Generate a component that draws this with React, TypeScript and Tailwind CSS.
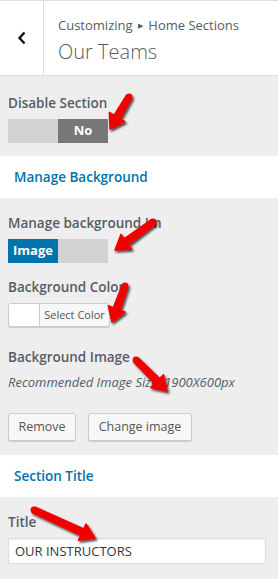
import React from 'react';

type Pt = [number, number];

// red annotation arrow: tail -> tip
function arrowPoints(tail: Pt, tip: Pt) {
    const [x1, y1] = tail;
    const [x2, y2] = tip;
    const dx = x2 - x1;
    const dy = y2 - y1;
    const len = Math.hypot(dx, dy);
    const ux = dx / len;
    const uy = dy / len;
    const nx = -uy;
    const ny = ux;
    const head = 14;
    const hw = 9;
    const bx = x2 - ux * head;
    const by = y2 - uy * head;
    const sw = 3.6;
    const tw = 3;
    const p: Pt[] = [
        [x1 + nx * tw, y1 + ny * tw],
        [bx + nx * sw, by + ny * sw],
        [bx + nx * hw, by + ny * hw],
        [x2, y2],
        [bx - nx * hw, by - ny * hw],
        [bx - nx * sw, by - ny * sw],
        [x1 - nx * tw, y1 - ny * tw],
    ];
    return p.map(([x, y]) => `${x.toFixed(1)},${y.toFixed(1)}`).join(' ');
}

const arrows: [Pt, Pt][] = [
    [[129, 97], [110, 129]],
    [[153, 222], [115, 250]],
    [[125, 286], [112, 322]],
    [[136, 360], [167, 391]],
    [[34, 510], [95, 538]],
];

function Arrows() {
    return (
        <svg className="pointer-events-none absolute inset-0" width="278" height="579" viewBox="0 0 278 579">
            <defs>
                <filter id="sh" x="-50%" y="-50%" width="200%" height="200%">
                    <feDropShadow dx="1.5" dy="2" stdDeviation="1.2" floodColor="#000" floodOpacity="0.7" />
                </filter>
            </defs>
            {arrows.map(([a, b], i) => (
                <g key={i} filter="url(#sh)">
                    <polygon points={arrowPoints(a, b)} fill="#f20000" strokeLinejoin="round" stroke="#f20000" strokeWidth="1.5" />
                    <circle cx={a[0]} cy={a[1]} r="3.4" fill="#f20000" />
                </g>
            ))}
        </svg>
    );
}

function Label({ children }: { children: React.ReactNode }) {
    return <div className="text-[13.5px] leading-[20px] font-semibold text-[#555d66] whitespace-nowrap">{children}</div>;
}

function SectionHead({ children }: { children: React.ReactNode }) {
    return (
        <div className="h-[42px] bg-white flex items-center pl-[14px] text-[13.5px] font-semibold text-[#0073aa]">
            {children}
        </div>
    );
}

function WpButton({ children, className = '' }: { children: React.ReactNode; className?: string }) {
    return (
        <button className={`h-[28px] rounded-[3px] border border-[#ccc] bg-[#f7f7f7] text-[12.5px] text-[#555] whitespace-nowrap shadow-[0_1px_0_#ccc] ${className}`}>
            {children}
        </button>
    );
}

export default function App() {
    return (
        <div className="relative w-[278px] h-[579px] overflow-hidden bg-[#eee] font-['Open_Sans',sans-serif]">
            {/* header */}
            <div className="h-[76px] bg-white border-t border-b border-[#ddd] flex">
                <div className="w-[44px] border-r border-[#ddd] flex items-center justify-center">
                    <svg width="10" height="14" viewBox="0 0 10 14">
                        <path d="M7.5 1.5 L2.5 7 L7.5 12.5" fill="none" stroke="#111" strokeWidth="2.4" />
                    </svg>
                </div>
                <div className="pl-[14px] pt-[14px]">
                    <div className="text-[13px] leading-[20px] text-[#555d66]">
                        Customizing <span className="text-[7px] align-[2px] mx-[2px]">▶</span> Home Sections
                    </div>
                    <div className="text-[20px] leading-[26px] font-light text-[#555d66] mt-[3px]">Our Teams</div>
                </div>
            </div>

            {/* disable section */}
            <div className="h-[80px] px-[8px] pt-[17px]">
                <Label>Disable Section</Label>
                <div className="mt-[6px] flex w-[100px] h-[24px]">
                    <div className="w-[50px] bg-[#d3d3d3]" />
                    <div className="w-[50px] bg-[#777] text-white text-[13px] font-bold flex items-center justify-center">No</div>
                </div>
            </div>

            <SectionHead>Manage Background</SectionHead>

            <div className="h-[257px] px-[8px] pt-[15px]">
                <Label>Manage background Im</Label>
                <div className="mt-[6px] flex w-[100px] h-[24px]">
                    <div className="w-[50px] bg-[#0073aa] text-white text-[13px] font-bold flex items-center justify-center">Image</div>
                    <div className="w-[50px] bg-[#d3d3d3]" />
                </div>

                <div className="mt-[14px]"><Label>Background Color</Label></div>
                <div className="mt-[6px] flex w-[102px] h-[24px] rounded-[3px] border border-[#ccc] bg-[#f7f7f7] shadow-[0_1px_0_#ccc] overflow-hidden">
                    <div className="w-[31px] bg-white border-r border-[#ccc]" />
                    <div className="flex-1 flex items-center justify-center text-[11px] text-[#555]">Select Color</div>
                </div>

                <div className="mt-[20px]"><Label>Background Image</Label></div>
                <div className="mt-[6px] text-[13px] leading-[18px] italic text-[#555d66]">Recommended Image Size: 1900X600px</div>
                <div className="mt-[22px] flex gap-[12px]">
                    <WpButton className="w-[68px]">Remove</WpButton>
                    <WpButton className="w-[104px]">Change image</WpButton>
                </div>
            </div>

            <SectionHead>Section Title</SectionHead>

            <div className="px-[8px] pt-[15px]">
                <Label>Title</Label>
                <input
                    readOnly
                    value="OUR INSTRUCTORS"
                    className="mt-[6px] block w-[258px] h-[26px] border border-[#ddd] bg-white px-[6px] text-[13px] text-[#32373c] shadow-[inset_0_1px_2px_rgba(0,0,0,0.07)] outline-none"
                />
            </div>

            <Arrows />
        </div>
    );
}
